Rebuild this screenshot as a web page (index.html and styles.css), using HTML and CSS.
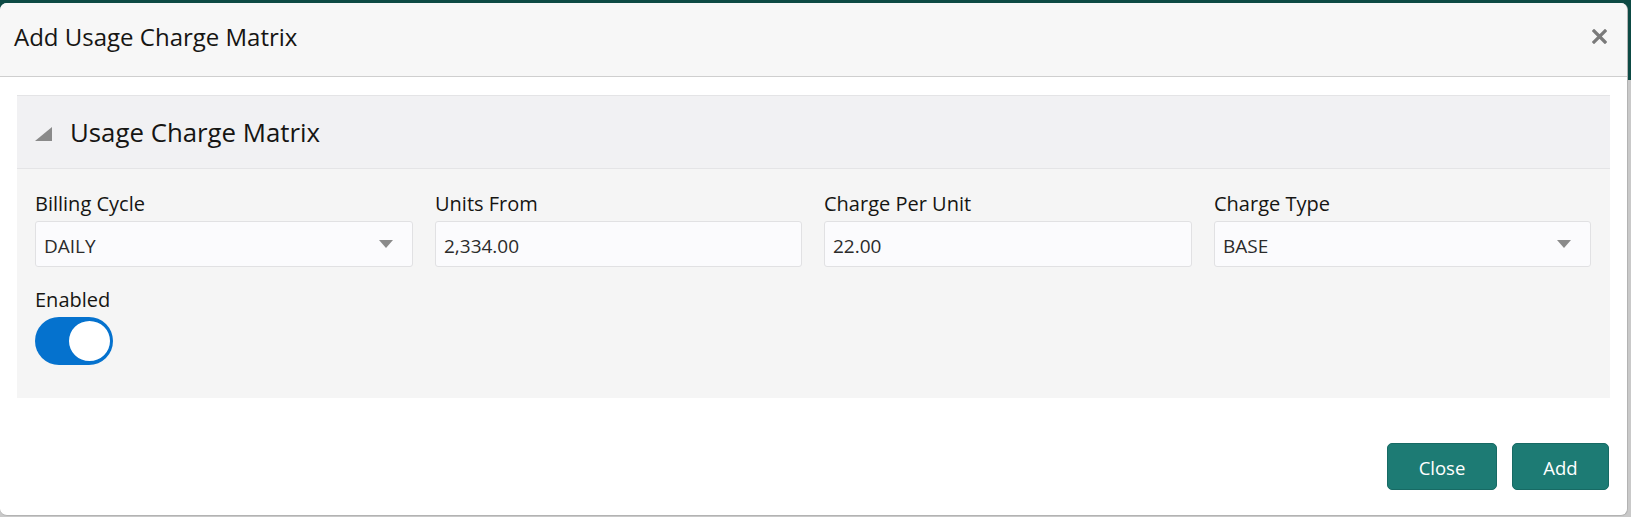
FILE: index.html
```html
<!DOCTYPE html>
<html lang="en">
<head>
    <meta charset="UTF-8">
    <meta name="viewport" content="width=device-width, initial-scale=1.0">
    <title>Add Usage Charge Matrix</title>
    <link rel="stylesheet" href="styles.css">
</head>
<body>
    <div class="dialog">
        <div class="dialog-header">
            <h1 class="dialog-title">Add Usage Charge Matrix</h1>
            <button class="close-x" title="Close">
                <svg width="15" height="15" viewBox="0 0 15 15">
                    <path d="M2 2 L13 13 M13 2 L2 13" stroke="#7a7a7a" stroke-width="3.2" stroke-linecap="square"/>
                </svg>
            </button>
        </div>
        <div class="dialog-body">
            <section class="panel">
                <div class="panel-header">
                    <svg class="collapse-icon" width="17" height="14" viewBox="0 0 17 14">
                        <polygon points="17,0 17,14 0,14" fill="#8a8a8a"/>
                    </svg>
                    <h2 class="panel-title">Usage Charge Matrix</h2>
                </div>
                <div class="panel-content">
                    <div class="field-grid">
                        <div class="field">
                            <label>Billing Cycle</label>
                            <div class="input select">
                                <span>DAILY</span>
                                <svg width="14" height="8" viewBox="0 0 14 8"><polygon points="0,0 14,0 7,8" fill="#8a8a8a"/></svg>
                            </div>
                        </div>
                        <div class="field">
                            <label>Units From</label>
                            <div class="input">2,334.00</div>
                        </div>
                        <div class="field">
                            <label>Charge Per Unit</label>
                            <div class="input">22.00</div>
                        </div>
                        <div class="field">
                            <label>Charge Type</label>
                            <div class="input select">
                                <span>BASE</span>
                                <svg width="14" height="8" viewBox="0 0 14 8"><polygon points="0,0 14,0 7,8" fill="#8a8a8a"/></svg>
                            </div>
                        </div>
                    </div>
                    <div class="field toggle-field">
                        <label>Enabled</label>
                        <div class="switch on"><span class="knob"></span></div>
                    </div>
                </div>
            </section>
        </div>
        <div class="dialog-footer">
            <button class="btn btn-close">Close</button>
            <button class="btn btn-add">Add</button>
        </div>
    </div>
</body>
</html>
```

FILE: styles.css
```css
* {
    box-sizing: border-box;
}
body {
    margin: 0;
    padding-top: 3px;
    font-family: "Open Sans", Lato, sans-serif;
    color: #161513;
    background: linear-gradient(#0d4a44 0, #0d4a44 80px, #c9c9c9 80px);
    height: 517px;
    overflow: hidden;
}
.dialog {
    width: 1628px;
    height: 513px;
    background: #fff;
    border-right: 1px solid #b3b3b3;
    border-bottom: 1px solid #b3b3b3;
    border-radius: 7px;
    overflow: hidden;
    display: flex;
    flex-direction: column;
}
.dialog-header {
    height: 74px;
    background: #f7f7f7;
    border-bottom: 1px solid #cfcfcf;
    display: flex;
    align-items: center;
    justify-content: space-between;
    padding: 0 20px 6px 14px;
}
.dialog-title {
    margin: 0;
    font-size: 24px;
    font-weight: normal;
}
.close-x {
    border: none;
    background: none;
    padding: 0;
    width: 15px;
    height: 15px;
    display: flex;
    cursor: pointer;
}
.dialog-body {
    padding: 18px 17px 0 17px;
}
.panel-header {
    height: 74px;
    background: #f1f1f3;
    border-top: 1px solid #e4e4e6;
    border-bottom: 1px solid #e4e4e6;
    display: flex;
    align-items: center;
    padding: 0 18px;
    gap: 18px;
}
.collapse-icon {
    margin-top: 4px;
}
.panel-title {
    margin: 0;
    font-size: 25.8px;
    font-weight: normal;
}
.panel-content {
    background: #f5f5f5;
    padding: 23px 18px 33px 18px;
}
.field-grid {
    display: grid;
    grid-template-columns: 378px 367px 368px 377px;
    column-gap: 22px;
}
.field label {
    display: block;
    font-size: 20px;
    line-height: 24px;
    margin-bottom: 5px;
}
.input {
    height: 46px;
    background: #fbfbfd;
    border: 1px solid #e1e1e3;
    border-radius: 3px;
    display: flex;
    align-items: center;
    justify-content: space-between;
    padding: 3px 19px 0 8px;
    font-size: 19px;
    color: #2b2b2b;
}
.select svg {
    margin-top: -3px;
}
.toggle-field {
    margin-top: 21px;
}
.switch {
    width: 78px;
    height: 48px;
    border-radius: 24px;
    background: #0572ce;
    position: relative;
}
.knob {
    position: absolute;
    top: 2px;
    right: 1px;
    width: 45px;
    height: 44px;
    border-radius: 50%;
    background: #fff;
    border: 2px solid #0572ce;
}
.dialog-footer {
    display: flex;
    justify-content: flex-end;
    gap: 15px;
    padding: 45px 18px 0 0;
}
.btn {
    height: 47px;
    padding-top: 3px;
    background: #1d7b74;
    color: #fff;
    border: 1px solid #176a64;
    border-radius: 5px;
    font-family: "Open Sans", Lato, sans-serif;
    font-size: 18.5px;
    cursor: pointer;
}
.btn-close {
    width: 110px;
}
.btn-add {
    width: 97px;
}
```
